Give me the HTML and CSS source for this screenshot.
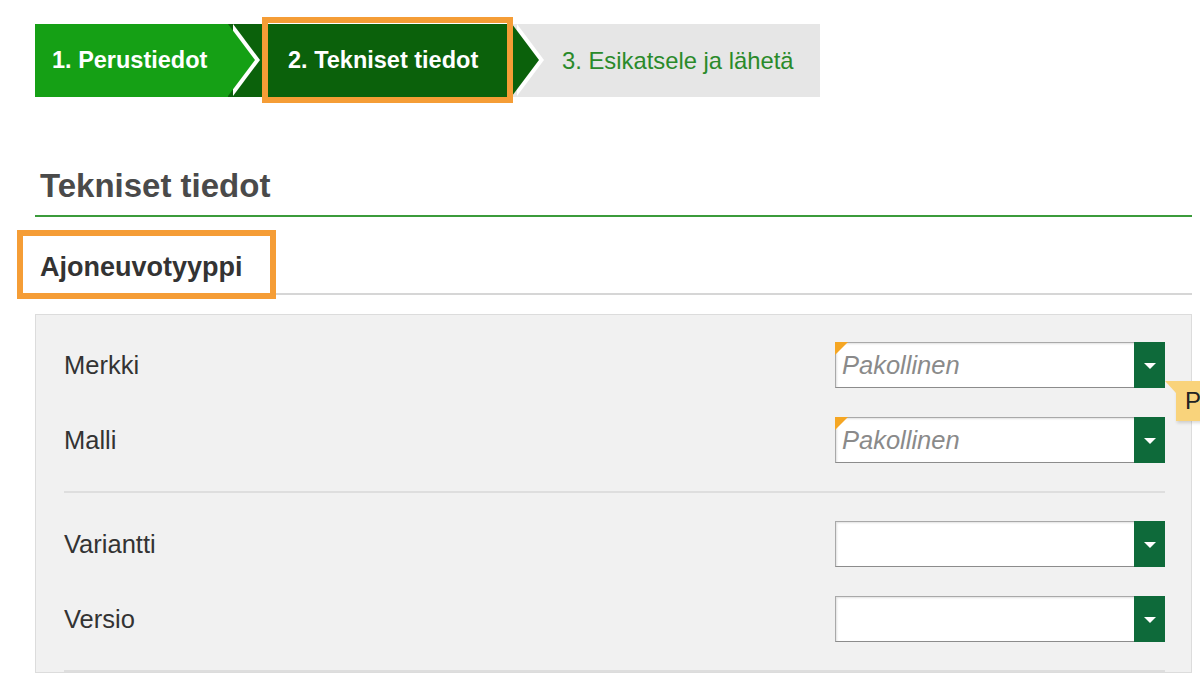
FILE: index.html
```html
<!DOCTYPE html>
<html lang="fi">
<head>
    <meta charset="UTF-8">
    <meta name="viewport" content="width=device-width, initial-scale=1.0">
    <title>Tekniset tiedot</title>
    <link rel="stylesheet" href="styles.css">
</head>
<body>

    <div class="page">
        <!-- Wizard steps -->
        <div class="steps">
            <div class="step step-done">1. Perustiedot</div>
            <div class="step step-active">
                2. Tekniset tiedot
                <span class="highlight"></span>
            </div>
            <div class="step step-next">3. Esikatsele ja lähetä</div>
        </div>

        <h2 class="page-title">Tekniset tiedot</h2>

        <div class="section-head">
            <h3 class="section-title">Ajoneuvotyyppi</h3>
            <span class="highlight"></span>
        </div>

        <div class="panel">
            <div class="field-group">
                <div class="field-row">
                    <label>Merkki</label>
                    <div class="select required">
                        <span class="placeholder">Pakollinen</span>
                        <span class="select-btn"></span>
                        <div class="tooltip">P</div>
                    </div>
                </div>
                <div class="field-row">
                    <label>Malli</label>
                    <div class="select required">
                        <span class="placeholder">Pakollinen</span>
                        <span class="select-btn"></span>
                    </div>
                </div>
            </div>

            <div class="field-group">
                <div class="field-row">
                    <label>Variantti</label>
                    <div class="select">
                        <span class="placeholder"></span>
                        <span class="select-btn"></span>
                    </div>
                </div>
                <div class="field-row">
                    <label>Versio</label>
                    <div class="select">
                        <span class="placeholder"></span>
                        <span class="select-btn"></span>
                    </div>
                </div>
            </div>
        </div>
    </div>

</body>
</html>
```

FILE: styles.css
```css
html, body {
    overflow: hidden;
}

body {
    margin: 0;
    padding: 0;
    background: #fff;
    font-family: "Liberation Sans", Arial, sans-serif;
    color: #333;
}

.page {
    width: 1157px;
    padding: 24px 0 0 35px;
}

/* Wizard steps */
.steps {
    display: flex;
    height: 73px;
}

.step {
    position: relative;
    display: flex;
    align-items: center;
    font-size: 23.5px;
    box-sizing: border-box;
}

/* white chevron behind the arrow */
.step-done::before,
.step-active::before {
    content: "";
    position: absolute;
    top: 0;
    left: calc(100% + 5px);
    border-top: 36.5px solid transparent;
    border-bottom: 36.5px solid transparent;
    border-left: 27px solid #fff;
}

.step-done::after,
.step-active::after {
    content: "";
    position: absolute;
    top: 0;
    left: 100%;
    border-top: 36.5px solid transparent;
    border-bottom: 36.5px solid transparent;
    border-left: 27px solid;
}

.step-done {
    width: 193px;
    padding-left: 17px;
    background: #15a015;
    color: #fff;
    font-weight: bold;
    z-index: 3;
}

.step-done::after {
    border-left-color: #15a015;
}

.step-active {
    width: 284px;
    padding-left: 60px;
    background: #0b610b;
    color: #fff;
    font-weight: bold;
    z-index: 2;
}

.step-active::after {
    border-left-color: #0b610b;
}

.step-next {
    width: 308px;
    padding-left: 50px;
    background: #e6e6e6;
    color: #2a8a2a;
    font-size: 23.8px;
    z-index: 1;
}

/* orange annotation frame */
.highlight {
    position: absolute;
    border: 6px solid #f59d36;
    box-sizing: border-box;
    pointer-events: none;
}

.step-active .highlight {
    left: 34px;
    right: -1px;
    top: -7px;
    bottom: -6px;
    z-index: 4;
}

/* Headings */
.page-title {
    margin: 70px 0 0;
    padding: 0 0 10px 5px;
    font-size: 33px;
    line-height: 38px;
    color: #4a4a4a;
    border-bottom: 2px solid #3b9b3b;
}

.section-head {
    position: relative;
    padding-top: 35px;
}

.section-title {
    position: relative;
    margin: 0;
    padding: 0 0 10px 5px;
    font-size: 27px;
    line-height: 31px;
    color: #333;
    border-bottom: 2px solid #d6d6d6;
}

.section-head .highlight {
    left: -18px;
    width: 259px;
    top: 13px;
    height: 69px;
}

/* Panel */
.panel {
    margin-top: 19px;
    background: #f1f1f1;
    border: 1px solid #dcdcdc;
    padding: 0 26px 0 28px;
}

.field-group {
    display: flex;
    flex-direction: column;
    gap: 29px;
    padding: 27px 0 28px;
    border-bottom: 2px solid #dedede;
}

.field-group + .field-group {
    padding-top: 28px;
}

.field-row {
    display: flex;
    justify-content: space-between;
    align-items: center;
}

.field-row label {
    font-size: 25.5px;
    color: #333;
}

.select {
    position: relative;
    display: flex;
    width: 330px;
    height: 46px;
    box-sizing: border-box;
    background: #fff;
    border: 1px solid #a9a9a9;
    border-bottom-color: #8c8c8c;
    box-shadow: inset 1px 1px 2px rgba(0, 0, 0, 0.12);
}

.select.required::before {
    content: "";
    position: absolute;
    top: -1px;
    left: -1px;
    border-top: 13px solid #f5a623;
    border-right: 13px solid transparent;
}

.placeholder {
    flex: 1;
    display: flex;
    align-items: center;
    padding-left: 6px;
    font-size: 25.5px;
    font-style: italic;
    color: #8a8a8a;
}

.select-btn {
    position: relative;
    width: 31px;
    margin: -1px -1px -1px 0;
    background: #0e6a3a;
}

.select-btn::after {
    content: "";
    position: absolute;
    top: 21px;
    left: 10px;
    border-top: 6px solid #fff;
    border-left: 6px solid transparent;
    border-right: 6px solid transparent;
}

/* Validation tooltip */
.tooltip {
    position: absolute;
    left: calc(100% + 12px);
    top: 38px;
    width: 40px;
    height: 40px;
    padding-left: 9px;
    display: flex;
    align-items: center;
    background: #f9d37b;
    color: #222;
    font-size: 24px;
    box-shadow: 1px 2px 3px rgba(0, 0, 0, 0.15);
}

.tooltip::before {
    content: "";
    position: absolute;
    top: 0;
    left: -11px;
    border-top: 12px solid #f9d37b;
    border-left: 11px solid transparent;
}
```
